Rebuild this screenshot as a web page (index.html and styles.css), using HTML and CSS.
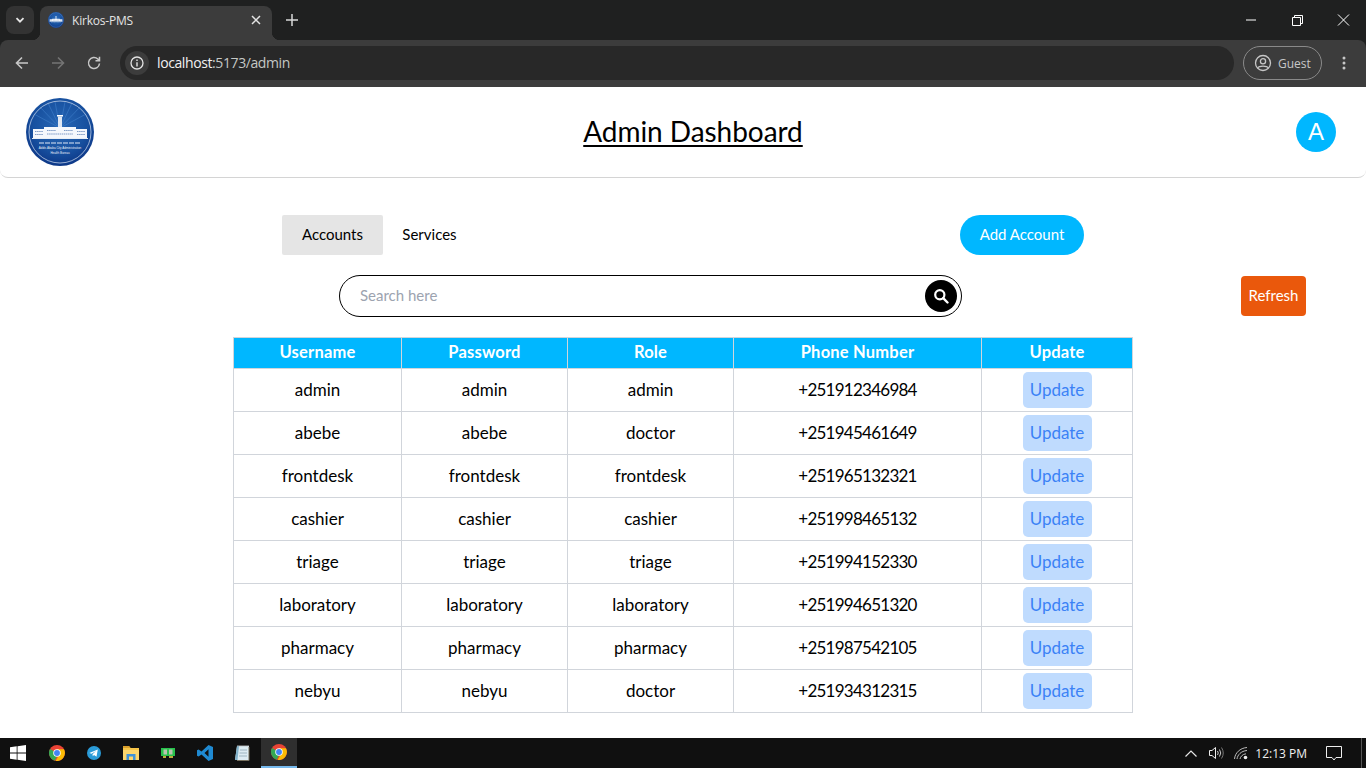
FILE: index.html
```html
<!DOCTYPE html>
<html lang="en">
<head>
<meta charset="utf-8">
<title>Kirkos-PMS</title>
<link rel="stylesheet" href="styles.css">
</head>
<body>
<svg class="defs" width="0" height="0" aria-hidden="true">
  <defs>
    <g id="chrome">
      <circle cx="12" cy="12" r="12" fill="#ea4335"/>
      <path d="M12 12 1.6 6 A12 12 0 0 0 8.5 23.5 L14 13.5Z" fill="#34a853"/>
      <path d="M12 6.5H22.4A12 12 0 0 1 10 23.9L15.5 14Z" fill="#fbbc04"/>
      <circle cx="12" cy="12" r="5.6" fill="#fff"/>
      <circle cx="12" cy="12" r="4.4" fill="#4285f4"/>
    </g>
    <radialGradient id="logobg" cx="50%" cy="40%" r="62%">
      <stop offset="0" stop-color="#2767b5"/>
      <stop offset=".65" stop-color="#17509f"/>
      <stop offset="1" stop-color="#0c3585"/>
    </radialGradient>
    <g id="seal">
      <circle cx="34" cy="34" r="34" fill="url(#logobg)"/>
      <path d="M34 30 8 16M34 30 14 9M34 30 22 5M34 30 29 4M34 30 39 4M34 30 46 5M34 30 54 9M34 30 60 16" stroke="#3a78c4" stroke-width=".7"/>
      <circle cx="34" cy="34" r="31" fill="none" stroke="#d5e1f2" stroke-width=".7"/>
      <rect x="31" y="17" width="6" height="1.500" fill="#fff"/>
      <rect x="32" y="18.500" width="4" height="11" fill="#dfe7f3"/>
      <path d="M7 31H18V29H50V31H61V40H7Z" fill="#f4f7fc"/>
      <path d="M9 33.500H17M9 36.500H17M21 32.500H30M38 32.500H47M51 33.500H59M51 36.500H59M21 36H47" stroke="#7e9ac5" stroke-width="1.100" stroke-dasharray="1.500 .6"/>
      <rect x="6" y="40" width="56" height=".9" fill="#fff"/>
      <path d="M13 45H55" stroke="#dfe8f5" stroke-width="1.100" stroke-dasharray="5 1"/>
    </g>
  </defs>
</svg>

<div class="browser">
  <div class="tabstrip">
    <button class="tab-menu" aria-label="Tab list">
      <svg width="12" height="12" viewBox="0 0 12 12"><path d="M2.500 4.200 6 7.700 9.500 4.200" fill="none" stroke="#e6e6e6" stroke-width="1.800"/></svg>
    </button>
    <div class="tab">
      <svg class="favicon" width="16" height="16" viewBox="0 0 68 68"><use href="#seal"/></svg>
      <span class="tab-title">Kirkos-PMS</span>
      <svg class="tab-close" width="10" height="10" viewBox="0 0 10 10"><path d="M1 1 9 9M9 1 1 9" stroke="#e3e3e3" stroke-width="1.500"/></svg>
    </div>
    <svg class="new-tab" width="12" height="12" viewBox="0 0 12 12"><path d="M6 0V12M0 6H12" stroke="#d8d8d8" stroke-width="1.500"/></svg>
    <div class="window-controls">
      <svg width="46" height="12" viewBox="0 0 46 12"><path d="M18 6H28" stroke="#fff"/></svg>
      <svg width="46" height="12" viewBox="0 0 46 12"><path d="M18.500 3.500H26.500V11.500H18.500ZM20.500 3.500V1.500H28.500V9.500H26.500" fill="none" stroke="#fff"/></svg>
      <svg width="46" height="12" viewBox="0 0 46 12"><path d="M18 .5 29 11.500M29 .5 18 11.500" stroke="#fff"/></svg>
    </div>
  </div>
  <div class="toolbar">
    <svg class="nav-icon" width="16" height="16" viewBox="0 0 16 16"><path d="M14 8H2.500M8 2.500 2.500 8 8 13.500" fill="none" stroke="#c7c7c7" stroke-width="1.600"/></svg>
    <svg class="nav-icon" width="16" height="16" viewBox="0 0 16 16"><path d="M2 8H13.500M8 2.500 13.500 8 8 13.500" fill="none" stroke="#747474" stroke-width="1.600"/></svg>
    <svg class="nav-icon" width="16" height="16" viewBox="0 0 16 16"><path d="M13.500 8.500A5.500 5.500 0 1 1 11.800 4L13.500 5.600M13.500 1.800V5.800H9.500" fill="none" stroke="#c7c7c7" stroke-width="1.500"/></svg>
    <div class="omnibox">
      <span class="site-info">
        <svg width="14" height="14" viewBox="0 0 14 14"><circle cx="7" cy="7" r="6" fill="none" stroke="#e3e3e3" stroke-width="1.300"/><path d="M7 6.200V10.500M7 3.500V5" stroke="#e3e3e3" stroke-width="1.400"/></svg>
      </span>
      <span class="url"><span class="url-host">localhost</span>:5173/admin</span>
    </div>
    <div class="guest">
      <svg width="18" height="18" viewBox="0 0 18 18"><circle cx="9" cy="9" r="7.500" fill="none" stroke="#c7c7c7" stroke-width="1.300"/><circle cx="9" cy="7.200" r="2.600" fill="none" stroke="#c7c7c7" stroke-width="1.300"/><path d="M3.800 14C5 11.500 13 11.500 14.200 14" fill="none" stroke="#c7c7c7" stroke-width="1.300"/></svg>
      <span>Guest</span>
    </div>
    <svg class="kebab" width="4" height="14" viewBox="0 0 4 14"><circle cx="2" cy="2" r="1.500" fill="#c7c7c7"/><circle cx="2" cy="7" r="1.500" fill="#c7c7c7"/><circle cx="2" cy="12" r="1.500" fill="#c7c7c7"/></svg>
  </div>
</div>

<header class="app-header">
  <svg class="logo" width="68" height="68" viewBox="0 0 68 68" role="img" aria-label="Addis Ababa City Administration Health Bureau">
    <use href="#seal"/>
    <text x="34" y="51" class="logo-text">Addis Ababa City Administration</text>
    <text x="34" y="56" class="logo-text">Health Bureau</text>
  </svg>
  <h1 class="app-title">Admin Dashboard</h1>
  <div class="avatar">A</div>
</header>

<main class="content">
  <div class="tabs-row">
    <div class="tabs">
      <button class="tab-btn is-active">Accounts</button>
      <button class="tab-btn">Services</button>
    </div>
    <button class="add-btn">Add Account</button>
  </div>
  <div class="search-row">
    <div class="search">
      <span class="search-placeholder">Search here</span>
      <span class="search-btn">
        <svg width="16" height="16" viewBox="0 0 16 16"><circle cx="6.800" cy="6.800" r="4.600" fill="none" stroke="#fff" stroke-width="2.200"/><path d="M10.200 10.200 14.500 14.500" stroke="#fff" stroke-width="2.400" stroke-linecap="round"/></svg>
      </span>
    </div>
    <button class="refresh-btn">Refresh</button>
  </div>
  <table class="accounts">
    <colgroup>
      <col class="col-user"><col class="col-pass"><col class="col-role"><col class="col-phone"><col class="col-update">
    </colgroup>
    <thead>
      <tr><th>Username</th><th>Password</th><th>Role</th><th>Phone Number</th><th>Update</th></tr>
    </thead>
    <tbody>
      <tr><td>admin</td><td>admin</td><td>admin</td><td class="phone">+251912346984</td><td><button class="update-btn">Update</button></td></tr>
      <tr><td>abebe</td><td>abebe</td><td>doctor</td><td class="phone">+251945461649</td><td><button class="update-btn">Update</button></td></tr>
      <tr><td>frontdesk</td><td>frontdesk</td><td>frontdesk</td><td class="phone">+251965132321</td><td><button class="update-btn">Update</button></td></tr>
      <tr><td>cashier</td><td>cashier</td><td>cashier</td><td class="phone">+251998465132</td><td><button class="update-btn">Update</button></td></tr>
      <tr><td>triage</td><td>triage</td><td>triage</td><td class="phone">+251994152330</td><td><button class="update-btn">Update</button></td></tr>
      <tr><td>laboratory</td><td>laboratory</td><td>laboratory</td><td class="phone">+251994651320</td><td><button class="update-btn">Update</button></td></tr>
      <tr><td>pharmacy</td><td>pharmacy</td><td>pharmacy</td><td class="phone">+251987542105</td><td><button class="update-btn">Update</button></td></tr>
      <tr><td>nebyu</td><td>nebyu</td><td>doctor</td><td class="phone">+251934312315</td><td><button class="update-btn">Update</button></td></tr>
    </tbody>
  </table>
</main>

<footer class="taskbar">
  <div class="task-start">
    <svg width="16" height="16" viewBox="0 0 16 16"><path d="M0 2.300 6.700 1.300V7.600H0ZM7.500 1.200 16 0V7.600H7.500ZM0 8.400H6.700V14.700L0 13.700ZM7.500 8.400H16V16L7.500 14.800Z" fill="#fff"/></svg>
  </div>
  <div class="task-item"><svg width="16" height="16" viewBox="0 0 24 24"><use href="#chrome"/></svg></div>
  <div class="task-item">
    <svg width="16" height="16" viewBox="0 0 16 16"><circle cx="8" cy="8" r="7" fill="#2a9bd8"/><path d="M3.300 7.900 11.800 4.500 10.500 11.700 8 10 6.800 11.200 6.500 9.300 10 6 5.600 8.700Z" fill="#fff"/></svg>
  </div>
  <div class="task-item">
    <svg width="16" height="16" viewBox="0 0 16 16"><path d="M0 1H6L7.500 3H16V15H0Z" fill="#f6c549"/><path d="M0 1H6L7.500 3H0Z" fill="#d99e2b"/><path d="M0 5H16V15H0Z" fill="#fbd66d"/><path d="M3.500 9H12.500V15H10V11.500H6V15H3.500Z" fill="#3f92d8"/></svg>
  </div>
  <div class="task-item">
    <svg width="14" height="10" viewBox="0 0 14 10"><rect x="0" y="0" width="14" height="8" fill="#27c24c"/><rect x="2.500" y="1.500" width="3.500" height="5" fill="#b9c4b0"/><rect x="8" y="1.500" width="3.500" height="5" fill="#b9c4b0"/><path d="M2 9H5M8 9H12" stroke="#f2e34c" stroke-width="1.600"/></svg>
  </div>
  <div class="task-item">
    <svg width="16" height="16" viewBox="0 0 16 16"><path d="M11.500 0 16 2V14L11.500 16 4.500 9.400 1.600 11.600 0 10.700V5.300L1.600 4.400 4.500 6.600ZM11.500 4.300 7.500 8 11.500 11.700Z" fill="#1f8ad2"/></svg>
  </div>
  <div class="task-item">
    <svg width="16" height="16" viewBox="0 0 16 16"><path d="M3 1H15V15H1Z" fill="#dcebf2"/><path d="M3 1 1 15H3.500L5 1Z" fill="#7fb0c8"/><path d="M3.500 .5H15" stroke="#a9a9a9" stroke-dasharray="1 1" stroke-width="2"/><path d="M6 5H13M5.500 8H13M5 11H13" stroke="#9db4c0"/><path d="M15 2V15.500H3" fill="none" stroke="#77705f"/></svg>
  </div>
  <div class="task-item is-open"><svg width="16" height="16" viewBox="0 0 24 24"><use href="#chrome"/></svg></div>
  <div class="tray">
    <svg width="12" height="7" viewBox="0 0 12 7"><path d="M.5 6.500 6 1 11.500 6.500" fill="none" stroke="#e8e8e8" stroke-width="1.200"/></svg>
    <svg class="tray-speaker" width="16" height="14" viewBox="0 0 16 14"><path d="M.5 4.500H3L6.500 1.500V12.500L3 9.500H.5Z" fill="none" stroke="#eee"/><path d="M8.500 5Q10 7 8.500 9M10.500 3.500Q13 7 10.500 10.500" fill="none" stroke="#ccc"/><path d="M12.500 1.500Q16 7 12.500 12.500" fill="none" stroke="#777"/></svg>
    <svg class="tray-wifi" width="14" height="14" viewBox="0 0 14 14"><path d="M.5 13C1 7 6 2 13 1.500M3 13C3.500 9 7 5 13 4.500M6 13C6.300 11 8.500 8 12 7.800" fill="none" stroke="#bbb" stroke-width="1"/><circle cx="11.500" cy="11.500" r="1.800" fill="#eee"/></svg>
    <span class="tray-time">12:13 PM</span>
    <svg class="tray-note" width="16" height="15" viewBox="0 0 16 15"><path d="M.5.5H15.500V11.500H10L8 14 6 11.500H.5Z" fill="none" stroke="#eee"/></svg>
    <span class="show-desktop"></span>
  </div>
</footer>
</body>
</html>
```
FILE: styles.css
```css
* { box-sizing: border-box; }
html, body { margin: 0; padding: 0; }
body {
  width: 1366px;
  height: 768px;
  overflow: hidden;
  display: flex;
  flex-direction: column;
  background: #fff;
  color: #000;
  font-family: Lato, "Open Sans", sans-serif;
}
button { font-family: inherit; border: 0; padding: 0; }
.defs { display: block; height: 0; }

/* Browser chrome */
.browser { flex: 0 0 87px; background: #1f2020; font-family: "Open Sans", "Noto Sans", sans-serif; }
.tabstrip { height: 40px; display: flex; align-items: flex-start; padding: 6px 0 0 6px; }
.tab-menu {
  width: 28px; height: 28px; border-radius: 8px; background: #333;
  display: flex; align-items: center; justify-content: center;
}
.tab {
  position: relative;
  width: 232px; height: 34px; margin-left: 6px; padding: 0 11px 6px 8px;
  display: flex; align-items: center;
  background: #3c3c3c; border-radius: 8px 8px 0 0;
}
.tab::before, .tab::after {
  content: ""; position: absolute; bottom: 0; width: 8px; height: 8px;
}
.tab::before { left: -8px; background: radial-gradient(circle at 0 0, transparent 8px, #3c3c3c 8.5px); }
.tab::after { right: -8px; background: radial-gradient(circle at 100% 0, transparent 8px, #3c3c3c 8.5px); }
.favicon { flex: none; }
.tab-title { flex: 1; margin-left: 8px; font-size: 12px; color: #e3e3e3; white-space: nowrap; letter-spacing: -.2px; }
.tab-close { flex: none; }
.new-tab { margin: 8px 0 0 14px; }
.window-controls { margin-left: auto; display: flex; padding: 8px 0 0; gap: 0; }
.toolbar {
  height: 47px; background: #3c3c3c; border-radius: 8px 8px 0 0;
  display: flex; align-items: center; padding: 0 0 1px 14px;
}
.nav-icon { margin-right: 20px; flex: none; }
.nav-icon:nth-child(3) { margin-right: 18px; }
.omnibox {
  width: 1114px; height: 34px; border-radius: 17px; background: #282828;
  display: flex; align-items: center; padding-left: 5px;
}
.site-info {
  width: 24px; height: 24px; border-radius: 50%; background: #3c3c3c;
  display: flex; align-items: center; justify-content: center;
}
.url { margin-left: 8px; font-size: 14px; color: #c4c7c5; letter-spacing: -.4px; padding-bottom: 1px; }
.url-host { color: #f1f1f1; }
.guest {
  width: 79px; height: 34px; margin-left: 9px; border: 1px solid #8a8a8a; border-radius: 17px;
  display: flex; align-items: center; gap: 6px; padding-left: 10px;
  font-size: 12px; color: #c7c7c7;
}
.kebab { margin-left: 20px; }

/* App header */
.app-header {
  flex: 0 0 91px;
  display: flex; align-items: center; justify-content: space-between;
  padding: 0 30px 0 26px;
  border-bottom: 1px solid #d4d4d4;
  border-radius: 0 0 8px 8px;
}
.logo { display: block; margin-top: -1px; }
.logo-text { font-family: "Liberation Sans", sans-serif; font-size: 3px; fill: #e8eef8; text-anchor: middle; }
.app-title {
  margin: 0 4px 2px 0; font-size: 28px; font-weight: 400; line-height: 36px; letter-spacing: -.05px;
  text-decoration: underline; text-underline-offset: 3px;
}
.avatar {
  width: 40px; height: 40px; border-radius: 50%; background: #00b7ff; color: #fff;
  display: flex; align-items: center; justify-content: center;
  font-family: "Liberation Sans", sans-serif; font-size: 24px;
}

/* Main */
.content { flex: 1; display: flex; flex-direction: column; align-items: center; min-height: 0; }
.tabs-row {
  width: 802px; height: 40px; margin-top: 37px;
  display: flex; align-items: stretch; justify-content: space-between;
}
.tabs { display: flex; }
.tab-btn { width: 93px; background: none; font-size: 15px; color: #000; border-radius: 2px; padding-bottom: 2px; }
.tab-btn.is-active { width: 101px; background: #e5e5e5; }
.add-btn { width: 124px; border-radius: 20px; background: #00b7ff; color: #fff; font-size: 15px; padding-bottom: 2px; }
.search-row {
  width: 100%; height: 42px; margin-top: 20px; padding: 0 60px 0 339px;
  display: flex; align-items: center; justify-content: space-between;
}
.search {
  width: 623px; height: 42px; border: 1px solid #000; border-radius: 21px;
  display: flex; align-items: center; justify-content: space-between;
  padding: 0 4px 0 20px;
}
.search-placeholder { font-size: 15px; color: #9ca3af; padding-bottom: 2px; }
.search-btn {
  width: 32px; height: 32px; border-radius: 50%; background: #000;
  display: flex; align-items: center; justify-content: center;
}
.refresh-btn { width: 65px; height: 40px; background: #ea580c; color: #fff; font-size: 15px; border-radius: 4px; padding-bottom: 2px; }

/* Table */
.accounts {
  width: 899px; margin-top: 20px; table-layout: fixed;
  border-collapse: collapse; text-align: center;
}
.col-user { width: 168px; }
.col-pass { width: 166px; }
.col-role { width: 166px; }
.col-phone { width: 248px; }
.col-update { width: 151px; }
.accounts th, .accounts td { border: 1px solid #d1d5db; padding: 0; }
.accounts th {
  height: 31px; padding-bottom: 2px; background: #00b7ff; color: #fff;
  font-size: 16.5px; font-weight: 700; letter-spacing: .2px;
}
.accounts td { height: 43px; padding-bottom: 1px; font-size: 17px; }
.accounts td.phone { letter-spacing: -.75px; }
.update-btn {
  display: block; width: 69px; height: 36px; margin: 1px auto 0;
  background: #bfdbfe; color: #3b82f6; font-size: 17px; border-radius: 5px; padding-bottom: 1px;
}

/* Taskbar */
.taskbar {
  flex: 0 0 30px; display: flex; align-items: stretch;
  background: #101010;
}
.task-start { width: 38px; padding-right: 2px; display: flex; align-items: center; justify-content: center; }
.task-item { width: 37px; display: flex; align-items: center; justify-content: center; }
.task-item.is-open { width: 36px; margin-left: 1px; background: #2f2f2f; border-bottom: 2px solid #76b9ed; }
.tray { margin-left: auto; display: flex; align-items: center; color: #f0f0f0; font-family: "Open Sans", sans-serif; font-size: 12px; }
.tray-speaker { margin-left: 12px; }
.tray-wifi { margin-left: 9px; }
.tray-time { margin-left: 7px; white-space: nowrap; }
.tray-note { margin-left: 19px; }
.show-desktop { width: 1px; height: 30px; margin-left: 19px; margin-right: 4px; background: #555; }
```
